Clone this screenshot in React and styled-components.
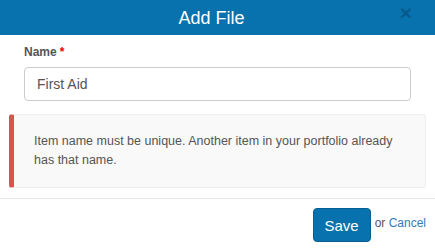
import React from "react";
import styled, { createGlobalStyle } from "styled-components";

const GlobalStyle = createGlobalStyle`
  body {
    margin: 0;
    background: #fff;
    font-family: "Liberation Sans", Arial, sans-serif;
  }
`;

const Modal = styled.div`
  width: 435px;
  height: 248px;
  background: #fff;
  display: flex;
  flex-direction: column;
`;

const Header = styled.div`
  position: relative;
  height: 35px;
  background: #0872ae;
  display: flex;
  align-items: center;
  justify-content: center;
  padding-right: 12px;
  box-sizing: border-box;
`;

const Title = styled.h4`
  margin: 0;
  color: #fff;
  font-size: 18px;
  font-weight: normal;
  line-height: 20px;
`;

const Close = styled.button`
  position: absolute;
  right: 23px;
  top: 2px;
  border: 0;
  background: none;
  padding: 0;
  font-family: "Liberation Sans", Arial, sans-serif;
  font-size: 21px;
  font-weight: bold;
  color: #000;
  opacity: 0.2;
  line-height: 21px;
  cursor: pointer;
`;

const Body = styled.div`
  padding: 10px 9px 0 9px;
  display: flex;
  flex-direction: column;
`;

const Field = styled.div`
  padding: 0 15px;
  display: flex;
  flex-direction: column;
`;

const Label = styled.label`
  font-size: 12px;
  font-weight: bold;
  color: #555;
  line-height: 14px;
  margin-bottom: 8px;
  span {
    color: #e00;
    margin-left: 3px;
  }
`;

const Input = styled.input`
  height: 34px;
  box-sizing: border-box;
  border: 1px solid #ccc;
  border-radius: 4px;
  padding: 0 12px;
  font-family: "Liberation Sans", Arial, sans-serif;
  font-size: 14px;
  color: #555;
  outline: none;
`;

const Alert = styled.div`
  margin-top: 13px;
  height: 74px;
  box-sizing: border-box;
  background: #f9f9f9;
  border: 1px solid #eee;
  border-left: 5px solid #d9534f;
  border-radius: 3px;
  padding: 17px 20px 0 20px;
  font-size: 12.5px;
  line-height: 19px;
  color: #555;
`;

const Footer = styled.div`
  margin-top: 10px;
  border-top: 1px solid #e5e5e5;
  padding: 9px 9px 0 0;
  display: flex;
  justify-content: flex-end;
  align-items: center;
`;

const SaveButton = styled.button`
  width: 58px;
  height: 34px;
  border: 1px solid #065f91;
  border-radius: 4px;
  background: #0872ae;
  color: #fff;
  font-family: "Liberation Sans", Arial, sans-serif;
  font-size: 15px;
  padding: 0;
  cursor: pointer;
`;

const Or = styled.span`
  margin-left: 4px;
  margin-bottom: 4px;
  font-size: 12px;
  color: #555;
  a {
    color: #337ab7;
    text-decoration: none;
  }
`;

export default function App() {
  return (
    <>
      <GlobalStyle />
      <Modal>
        <Header>
          <Title>Add File</Title>
          <Close aria-label="Close">×</Close>
        </Header>
        <Body>
          <Field>
            <Label>
              Name<span>*</span>
            </Label>
            <Input defaultValue="First Aid" />
          </Field>
          <Alert>
            Item name must be unique. Another item in your portfolio already
            has that name.
          </Alert>
        </Body>
        <Footer>
          <SaveButton>Save</SaveButton>
          <Or>
            or <a href="#">Cancel</a>
          </Or>
        </Footer>
      </Modal>
    </>
  );
}
